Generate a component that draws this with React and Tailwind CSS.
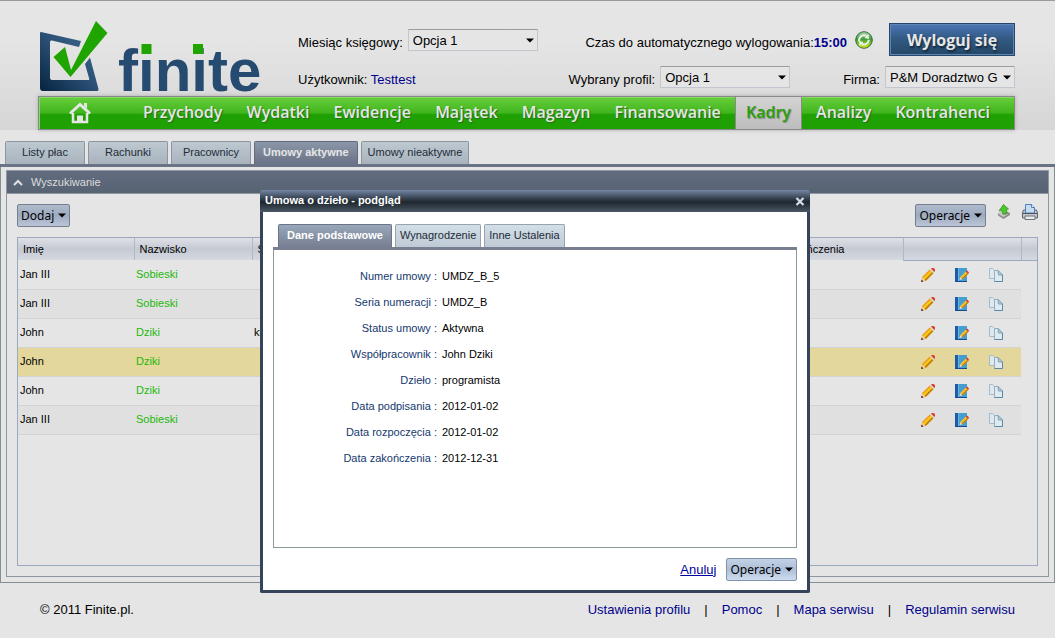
import { useState } from 'react';

const navItems = [
  'Przychody',
  'Wydatki',
  'Ewidencje',
  'Majątek',
  'Magazyn',
  'Finansowanie',
  'Kadry',
  'Analizy',
  'Kontrahenci',
];

const listTabs = ['Listy płac', 'Rachunki', 'Pracownicy', 'Umowy aktywne', 'Umowy nieaktywne'];

const people = [
  { name: 'Jan III', surname: 'Sobieski' },
  { name: 'Jan III', surname: 'Sobieski' },
  { name: 'John', surname: 'Dziki', note: 'kt' },
  { name: 'John', surname: 'Dziki', selected: true },
  { name: 'John', surname: 'Dziki' },
  { name: 'Jan III', surname: 'Sobieski' },
];

const dialogTabs = ['Dane podstawowe', 'Wynagrodzenie', 'Inne Ustalenia'];

const details = [
  ['Numer umowy', 'UMDZ_B_5'],
  ['Seria numeracji', 'UMDZ_B'],
  ['Status umowy', 'Aktywna'],
  ['Współpracownik', 'John Dziki'],
  ['Dzieło', 'programista'],
  ['Data podpisania', '2012-01-02'],
  ['Data rozpoczęcia', '2012-01-02'],
  ['Data zakończenia', '2012-12-31'],
];

const footerLinks = ['Ustawienia profilu', 'Pomoc', 'Mapa serwisu', 'Regulamin serwisu'];

function Logo() {
  return (
    <svg
      width="222"
      height="71"
      viewBox="0 0 222 71"
      className="overflow-visible"
      role="img"
      aria-label="finite"
    >
      <defs>
        <linearGradient id="frame" x1="1" y1="0" x2="0" y2="1">
          <stop offset="0" stopColor="#3f6a92" />
          <stop offset="0.5" stopColor="#2b5075" />
          <stop offset="1" stopColor="#05233f" />
        </linearGradient>
      </defs>
      <path
        d="M1 11 L41 20 L39 26 L12 19.500 Q10 19 10 21 V57 Q10 59 12 59 H48 Q50 59 49 57 L45 43 L50 36.500 L58.500 68 Q59 70 57 70 H3 Q0 70 0 67 V12 Q0 11 1 11 Z"
        fill="url(#frame)"
      />
      <path d="M13.500 36 L25 26 L31 49 L56 0 L67.500 12 L30.500 56 Z" fill="#20a400" />
      <text
        x="78"
        y="69.500"
        fontFamily="'Liberation Sans', sans-serif"
        fontWeight="700"
        fontSize="60"
        fill="#254c70"
      >
        finite
      </text>
      <path d="M101.500 23 h10 v10 h-10 Z M153 23 h10 v10 h-10 Z" fill="#20a400" />
    </svg>
  );
}

function Caret({ className = '' }) {
  return (
    <svg width="8" height="5" viewBox="0 0 8 5" className={className} aria-hidden="true">
      <path d="M0 0.500 H8 L4 4.500 Z" fill="#000" />
    </svg>
  );
}

function HomeIcon() {
  return (
    <svg width="22" height="22" viewBox="0 0 22 22" aria-hidden="true">
      <path d="M1 11.500 L11 2.500 L21 11.500" fill="none" stroke="#e6e6e6" strokeWidth="3" />
      <path d="M15 1 h3 v6 l-3 -3 Z" fill="#e6e6e6" />
      <path d="M4 11 V20 H18 V11" fill="none" stroke="#e6e6e6" strokeWidth="2.500" />
      <path d="M8 21 V13.500 H14 V21 Z" fill="#e6e6e6" />
    </svg>
  );
}

function RefreshIcon() {
  return (
    <svg width="18" height="18" viewBox="0 0 18 18" aria-hidden="true">
      <defs>
        <linearGradient id="ball" x1="0" y1="0" x2="0" y2="1">
          <stop offset="0" stopColor="#b4d4b2" />
          <stop offset="0.450" stopColor="#3f9c3c" />
          <stop offset="1" stopColor="#d8ea12" />
        </linearGradient>
      </defs>
      <circle cx="9" cy="9" r="8.300" fill="url(#ball)" stroke="#2f6f35" strokeWidth="1" />
      <path d="M4.200 10.500 A5 5 0 0 1 11.500 5" fill="none" stroke="#e9f2e4" strokeWidth="2" />
      <path d="M13.500 2.800 L14 8 L9.500 7 Z" fill="#e9f2e4" />
      <path d="M13.800 8.800 A5 5 0 0 1 6.500 13" fill="none" stroke="#e9f2e4" strokeWidth="2" />
      <path d="M4.500 15.200 L4 10 L8.500 11 Z" fill="#e9f2e4" />
    </svg>
  );
}

function ExportIcon() {
  return (
    <svg width="14" height="16" viewBox="0 0 14 16" aria-hidden="true">
      <path d="M1 9.500 L4 8 L7 11 L10 7.500 L13 9 V11 L6.500 15 L1 11.500 Z" fill="#8d8d8d" />
      <path d="M1 9.500 L4 8 L8 11 L12.500 9 L6.500 13 Z" fill="#c9c9c9" />
      <path
        d="M6.500 0.500 L11.500 5 L9.500 5.500 L10 9 L6 10.500 L5 6.800 L2 6.800 Z"
        fill="#4cc42c"
        stroke="#2f8f1c"
        strokeWidth="0.700"
      />
    </svg>
  );
}

function PrinterIcon() {
  return (
    <svg width="16" height="16" viewBox="0 0 16 16" aria-hidden="true">
      <path d="M1.500 6 H14.500 L15.500 9 V14 H0.500 V9 Z" fill="#c4c6cb" stroke="#5f636c" />
      <path d="M3.500 9 V0.500 H9.500 L12.500 3.500 V9 Z" fill="#c6dcf3" stroke="#4d7fbd" />
      <path d="M9.500 0.500 V3.500 H12.500" fill="#eef5fc" stroke="#4d7fbd" />
      <path d="M1 9.500 H15" stroke="#50545c" />
      <path d="M3 12 H13 V15.500 H3 Z" fill="#e9ebef" stroke="#6f737c" />
    </svg>
  );
}

function PencilIcon() {
  return (
    <svg width="14" height="14" viewBox="0 0 14 14" aria-hidden="true">
      <path d="M0 14 L1 9.200 L4.800 13 Z" fill="#f0c9a0" />
      <path d="M0 14 L0.500 11.400 L2.600 13.500 Z" fill="#5a2416" />
      <path d="M1 9.200 L8.800 1.600 L12.400 5.200 L4.800 13 Z" fill="#f6c914" />
      <path d="M3.600 11.800 L11.300 4.100 L12.400 5.200 L4.800 13 Z" fill="#c07c10" />
      <path d="M1 9.200 L8.800 1.600 L9.700 2.500 L1.900 10.100 Z" fill="#ee9428" />
      <path d="M8.800 1.600 L10 0.600 L13.400 4 L12.400 5.200 Z" fill="#d3d6d8" />
      <path d="M10 0.600 Q12 -0.800 13.500 0.700 Q14.800 2.200 13.400 4 Z" fill="#dc3a22" />
    </svg>
  );
}

function NotebookIcon() {
  return (
    <svg width="14" height="14" viewBox="0 0 14 14" aria-hidden="true">
      <path d="M0 0 H12 V14 H0 Z" fill="#469dcf" />
      <path d="M0 0 H3 V14 H0 Z" fill="#1d5ba6" />
      <path d="M3 0 H4 V13 H3 Z" fill="#6bb5de" />
      <path d="M0 13 H12 V14 H0 Z" fill="#174b90" />
      <path d="M4.500 12 L5.200 9 L7.500 11.300 Z" fill="#f3dcc0" />
      <path d="M5.200 9 L10.800 3.600 L13.200 5.900 L7.500 11.300 Z" fill="#f4bf2c" />
      <path d="M6.700 10.500 L12.400 5.100 L13.200 5.900 L7.500 11.300 Z" fill="#b97a14" />
      <path d="M10.800 3.600 L12.200 2.500 L14 4.500 L13.200 5.900 Z" fill="#df3c2a" />
    </svg>
  );
}

function CopyIcon() {
  return (
    <svg width="14" height="14" viewBox="0 0 14 14" aria-hidden="true">
      <path d="M0.500 0.500 H3.500 L6.500 3.500 V10.500 H0.500 Z" fill="#dfe8ee" stroke="#a3bbca" />
      <path d="M5.500 2.500 H9 L13.500 7 V13.500 H5.500 Z" fill="#dfe9f0" stroke="#93b0c3" />
      <path d="M9 2.500 L9.500 7 H13.500 Z" fill="#b9cedb" stroke="#7fa2b8" />
      <path d="M13.500 7 V13.500 H5.500" fill="none" stroke="#5b8aa8" />
    </svg>
  );
}

function SelectField({ id, label, value }) {
  return (
    <div className="flex items-center gap-[5px]">
      <label htmlFor={id} className="pt-1.5">
        {label}
      </label>
      <div className="relative">
        <select
          id={id}
          className="block h-[22px] w-[130px] appearance-none overflow-hidden rounded-[1px] border border-[#c3c6cf] border-t-[#9a9ba3] bg-[#e5e5e5] pt-px pr-3 pl-1 text-[13px]"
        >
          <option>{value}</option>
        </select>
        <Caret className="pointer-events-none absolute top-[9px] right-1" />
      </div>
    </div>
  );
}

function MenuButton({ children, bright }) {
  return (
    <button
      className={`flex h-[23px] items-center gap-1 rounded-xs border px-[3px] font-['Noto_Sans',sans-serif] text-[12px] ${
        bright
          ? 'border-[#8292a8] bg-linear-to-b from-[#c3d2e6] via-[#adbfd7] to-[#cfdcef]'
          : 'border-[#767e8f] bg-linear-to-b from-[#afbbcc] via-[#9dabc0] to-[#bcc5d8]'
      }`}
    >
      {children}
      <Caret />
    </button>
  );
}

function Header() {
  return (
    <header className="border-t border-[#999] bg-linear-to-b from-[#e5e5e5] from-30% to-[#d6d6d6] pr-10 pl-[38px] text-[13px]">
      <div className="flex pt-5 pl-0.5">
        <Logo />
        <div className="flex flex-1 flex-col gap-2.5 pt-0.5 pl-9">
          <div className="flex h-[33px] items-center justify-between">
            <SelectField id="month" label="Miesiąc księgowy:" value="Opcja 1" />
            <div className="flex items-center">
              <p className="pt-1.5">
                Czas do automatycznego wylogowania:
                <strong className="text-[#00008b]">15:00</strong>
              </p>
              <button aria-label="Odśwież" className="ml-2">
                <RefreshIcon />
              </button>
              <button className="ml-4 h-[33px] w-[126px] border border-[#24486b] bg-linear-to-b from-[#4b75b8] via-[#345b85] via-45% to-[#244867] font-['Open_Sans',sans-serif] text-[16px] font-bold text-[#e6e6e6] shadow-[inset_0_0_0_1px_#5f86b4] text-shadow-[1px_2px_2px_#12263a]">
                Wyloguj się
              </button>
            </div>
          </div>
          <div className="flex h-[22px] items-center">
            <p className="pt-1.5">
              Użytkownik:{' '}
              <a href="#user" className="text-[#00008b]">
                Testtest
              </a>
            </p>
            <div className="ml-auto flex gap-[53px]">
              <SelectField id="profile" label="Wybrany profil:" value="Opcja 1" />
              <SelectField id="company" label="Firma:" value="P&M Doradztwo G" />
            </div>
          </div>
        </div>
      </div>
      <nav className="mt-1 flex h-[34px] items-stretch border border-[#85898a] bg-linear-to-b from-[#68cf3b] via-[#3fb51c] via-50% to-[#1fa003] to-55% pr-3.5 pl-[30px] font-['Open_Sans',sans-serif] text-[16px] font-semibold text-[#e6e6e6] shadow-[inset_1px_1px_0_#86d963,0_0_4px_#aaa]">
        <a href="#home" aria-label="Strona główna" className="flex items-center">
          <HomeIcon />
        </a>
        <div className="ml-[42px] flex flex-1 justify-between">
          {navItems.map((item) => (
            <a
              key={item}
              href={`#${item}`}
              className={
                item === 'Kadry'
                  ? 'flex items-center border-x border-[#8a8a8a] bg-linear-to-b from-[#d3d3d3] to-[#bdbdbd] px-2.5 pb-0.5 text-[#24a008] text-shadow-[1px_1px_1px_#888]'
                  : 'flex items-center px-2.5 pb-0.5 text-shadow-[1px_1px_1px_#2b6b18]'
              }
            >
              {item}
            </a>
          ))}
        </div>
      </nav>
    </header>
  );
}

function ListTabs() {
  return (
    <div className="flex gap-[3px] border-b-3 border-[#6b7386] px-[5px] pt-[11px]">
      {listTabs.map((tab) => (
        <button
          key={tab}
          className={
            tab === 'Umowy aktywne'
              ? 'h-[23px] rounded-t-xs border border-b-0 border-[#636c7e] bg-linear-to-b from-[#8a97a9] to-[#6b7386] px-2 pb-0.5 font-bold text-[#e6e6e6]'
              : 'h-[23px] min-w-20 rounded-t-xs border border-b-0 border-[#8d96a0] bg-linear-to-b from-[#bdc8d1] to-[#a9b3bd] px-1.5 pb-0.5 text-[#222c38]'
          }
        >
          {tab}
        </button>
      ))}
    </div>
  );
}

function PeopleTable() {
  return (
    <div className="mt-2.5 h-[329px] overflow-hidden border border-[#9aa9bd]">
      <table className="w-full table-fixed border-collapse text-left">
        <colgroup>
          <col className="w-[116px]" />
          <col className="w-[118px]" />
          <col />
          <col className="w-[151px]" />
          <col className="w-[118px]" />
          <col className="w-[16px]" />
        </colgroup>
        <thead>
          <tr className="h-[22px] bg-linear-to-b from-[#dfe1e6] via-[#c5c9d2] via-50% to-[#d5d9e0]">
            <th className="border-r border-[#b3b8c0] pl-[5px] font-normal">Imię</th>
            <th className="border-r border-[#b3b8c0] pl-[5px] font-normal">Nazwisko</th>
            <th className="pl-[5px] font-normal">S</th>
            <th className="border-r border-[#b3b8c0] pl-[5px] font-normal">Data zakończenia</th>
            <th className="border-r border-b border-[#b3b8c0] border-b-[#9aa9bd]" />
            <th className="border-b border-[#9aa9bd]" />
          </tr>
        </thead>
        <tbody>
          {people.map((person, idx) => (
            <tr key={idx} className="h-[29px]">
              {['name', 'surname', 'note', 'end', 'actions'].map((field) => (
                <td
                  key={field}
                  className={`border-b border-[#d3d3d3] pl-0.5 ${
                    person.selected ? 'bg-[#e3d79b]' : idx % 2 ? 'bg-[#e0e0e0]' : 'bg-[#e5e5e5]'
                  } ${field === 'surname' ? 'text-[#22b80a]' : ''}`}
                >
                  {field === 'actions' ? (
                    <div className="flex gap-5 pl-4">
                      <button aria-label="Edytuj">
                        <PencilIcon />
                      </button>
                      <button aria-label="Podgląd">
                        <NotebookIcon />
                      </button>
                      <button aria-label="Kopiuj">
                        <CopyIcon />
                      </button>
                    </div>
                  ) : (
                    person[field]
                  )}
                </td>
              ))}
              <td />
            </tr>
          ))}
        </tbody>
      </table>
    </div>
  );
}

function ContractDialog({ onClose }) {
  return (
    <div
      role="dialog"
      aria-labelledby="dialog-title"
      className="absolute top-[190px] left-[260px] w-[550px] rounded-t-xs rounded-b-xs border-3 border-t-0 border-[#35445a] bg-white text-[11px]"
    >
      <div className="-mx-[3px] flex h-[22px] items-center justify-between rounded-t-xs bg-linear-to-b from-[#7487a5] via-[#1f272f] via-55% to-[#4a5866] px-[5px] pb-0.5 text-white">
        <h2 id="dialog-title" className="font-bold">
          Umowa o dzieło - podgląd
        </h2>
        <button aria-label="Zamknij" onClick={onClose} className="pt-0.5">
          <svg width="10" height="9" viewBox="0 0 10 9" aria-hidden="true">
            <path d="M1.500 1 L8.500 8 M8.500 1 L1.500 8" stroke="#d5dfea" strokeWidth="2.200" />
          </svg>
        </button>
      </div>
      <div className="px-2.5 pt-3 pb-[9px]">
        <div className="flex gap-[3px] border-b-3 border-[#787f92] pl-[5px]">
          {dialogTabs.map((tab, idx) => (
            <button
              key={tab}
              className={
                idx === 0
                  ? 'h-[23px] rounded-t-xs border border-b-0 border-[#6b7488] bg-linear-to-b from-[#98a7ba] to-[#787f92] px-2 pb-0.5 font-bold text-white'
                  : 'h-[23px] rounded-t-xs border border-b-0 border-[#98a3ae] bg-linear-to-b from-[#d3dfe8] to-[#bfcad4] px-1 pb-0.5 text-[#222c38]'
              }
            >
              {tab}
            </button>
          ))}
        </div>
        <dl className="h-[298px] border border-t-0 border-[#8b999b] pt-[13px]">
          {details.map(([label, value]) => (
            <div key={label} className="flex h-[26px] items-center gap-[5px]">
              <dt className="w-[163px] text-right text-[#15396f]">{label} :</dt>
              <dd>{value}</dd>
            </div>
          ))}
        </dl>
        <div className="mt-2.5 flex items-center justify-end gap-2.5">
          <a href="#anuluj" className="text-[13px] text-[#0000a0] underline">
            Anuluj
          </a>
          <MenuButton bright>Operacje</MenuButton>
        </div>
      </div>
    </div>
  );
}

export default function App() {
  const [open, setOpen] = useState(true);

  return (
    <div className="relative min-h-screen bg-[#e5e5e5] font-['Liberation_Sans',Arial,sans-serif] text-[11px] text-black">
      <Header />
      <ListTabs />

      <main className="border border-t-0 border-[#848f90] px-[5px] pt-[3px] pb-[5px]">
        <section className="border border-[#8f97a3]">
          <div className="flex h-[23px] items-center gap-2 border-b border-[#8f97a3] bg-linear-to-b from-[#616d7e] to-[#576273] px-1.5 text-[#dcdcdc]">
            <svg width="10" height="7" viewBox="0 0 10 7" aria-hidden="true">
              <path d="M1 6 L5 2 L9 6" fill="none" stroke="#e0e0e0" strokeWidth="2" />
            </svg>
            <h1>Wyszukiwanie</h1>
          </div>
          <div className="px-2.5 pt-2.5 pb-2.5">
            <div className="flex items-start">
              <MenuButton>Dodaj</MenuButton>
              <div className="ml-auto flex items-start gap-[11px]">
                <MenuButton>Operacje</MenuButton>
                <button aria-label="Eksportuj">
                  <ExportIcon />
                </button>
                <button aria-label="Drukuj">
                  <PrinterIcon />
                </button>
              </div>
            </div>
            <PeopleTable />
          </div>
        </section>
      </main>

      <footer className="flex justify-between px-10 pt-[17px] text-[13px]">
        <p>© 2011 Finite.pl.</p>
        <ul className="flex">
          {footerLinks.map((link, idx) => (
            <li key={link}>
              {idx > 0 && <span className="px-3.5">|</span>}
              <a href={`#${link}`} className="text-[#00008b]">
                {link}
              </a>
            </li>
          ))}
        </ul>
      </footer>

      {open && <ContractDialog onClose={() => setOpen(false)} />}
    </div>
  );
}
